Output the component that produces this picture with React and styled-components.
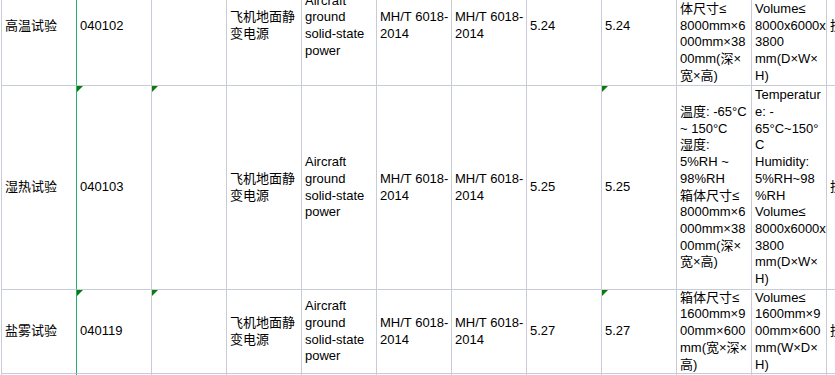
import styled, { createGlobalStyle } from 'styled-components';

const GlobalStyle = createGlobalStyle`
  html, body {
    margin: 0;
    padding: 0;
    background: #ffffff;
  }
  body {
    font-family: "Liberation Sans", "Noto Sans CJK SC", Arial, sans-serif;
  }
`;

const Viewport = styled.div`
  width: 835px;
  height: 375px;
  overflow: hidden;
  padding-left: 1px;
  box-sizing: border-box;
`;

const Sheet = styled.div`
  display: grid;
  grid-template-columns: repeat(11, 75px) 60px;
  grid-template-rows: 119px 204px 84px 40px;
  margin-top: -33px;
  border-left: 1px solid #c8ccd6;
  width: max-content;
`;

const Cell = styled.div`
  position: relative;
  box-sizing: border-box;
  display: flex;
  align-items: center;
  padding: 0 2px 0 3px;
  border-right: 1px solid ${({ $accent }) => ($accent ? '#22b26e' : '#c8ccd6')};
  border-bottom: 1px solid #c8ccd6;
  font-size: 13px;
  line-height: 16.7px;
  color: #000;
  overflow: hidden;
`;

const Lines = styled.div`
  display: flex;
  flex-direction: column;
`;

const Line = styled.span`
  white-space: nowrap;
`;

const Flag = styled.span`
  position: absolute;
  top: 0;
  left: 0;
  width: 0;
  height: 0;
  border-top: 6px solid #0b7a12;
  border-right: 6px solid transparent;
`;

const rows = [
  {
    name: '高温试验',
    code: '040102',
    clause: '5.24',
    zh: ['温度: 室温 ~', '200°C 箱', '体尺寸≤', '8000mm×6', '000mm×38', '00mm(深×', '宽×高)'],
    en: ['Temperatur', 'e: 200°C', 'Volume≤', '8000x6000x', '3800', 'mm(D×W×', 'H)'],
  },
  {
    name: '湿热试验',
    code: '040103',
    clause: '5.25',
    zh: ['温度: -65°C', '~ 150°C', '湿度:', '5%RH ~', '98%RH', '箱体尺寸≤', '8000mm×6', '000mm×38', '00mm(深×', '宽×高)'],
    en: ['Temperatur', 'e: -', '65°C~150°', 'C', 'Humidity:', '5%RH~98', '%RH', 'Volume≤', '8000x6000x', '3800', 'mm(D×W×', 'H)'],
  },
  {
    name: '盐雾试验',
    code: '040119',
    clause: '5.27',
    zh: ['箱体尺寸≤', '1600mm×9', '00mm×600', 'mm(宽×深×', '高)'],
    en: ['Volume≤', '1600mm×9', '00mm×600', 'mm(W×D×', 'H)'],
  },
];

const product = ['飞机地面静', '变电源'];
const productEn = ['Aircraft', 'ground', 'solid-state', 'power'];
const standard = ['MH/T 6018-', '2014'];

const Text = ({ lines }) => (
  <Lines>
    {lines.map((l, i) => (
      <Line key={i}>{l}</Line>
    ))}
  </Lines>
);

const App = () => (
  <>
    <GlobalStyle />
    <Viewport>
      <Sheet>
        {rows.map((r) => (
          <div key={r.code} style={{ display: 'contents' }}>
            <Cell $accent>{r.name}</Cell>
            <Cell>
              <Flag />
              {r.code}
            </Cell>
            <Cell>
              <Flag />
            </Cell>
            <Cell>
              <Text lines={product} />
            </Cell>
            <Cell>
              <Text lines={productEn} />
            </Cell>
            <Cell>
              <Text lines={standard} />
            </Cell>
            <Cell>
              <Text lines={standard} />
            </Cell>
            <Cell>{r.clause}</Cell>
            <Cell>
              <Flag />
              {r.clause}
            </Cell>
            <Cell>
              <Text lines={r.zh} />
            </Cell>
            <Cell>
              <Text lines={r.en} />
            </Cell>
            <Cell>技术</Cell>
          </div>
        ))}
        {Array.from({ length: 12 }).map((_, i) => (
          <Cell key={i} $accent={i === 0} />
        ))}
      </Sheet>
    </Viewport>
  </>
);

export default App;
